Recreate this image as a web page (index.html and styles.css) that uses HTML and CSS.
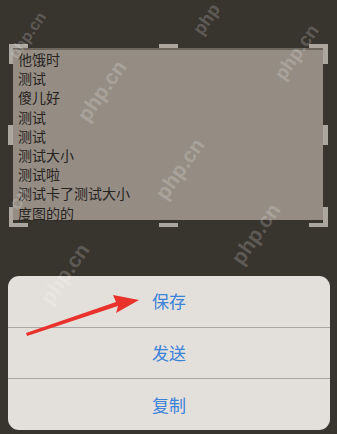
FILE: index.html
```html
<!DOCTYPE html>
<html lang="zh">
<head>
<meta charset="utf-8">
<link rel="stylesheet" href="styles.css">
</head>
<body>
<div class="screen">
  <div class="canvas">
    <div class="box">
      <div class="line">他饿时</div>
      <div class="line">测试</div>
      <div class="line">傻儿好</div>
      <div class="line">测试</div>
      <div class="line">测试</div>
      <div class="line">测试大小</div>
      <div class="line">测试啦</div>
      <div class="line">测试卡了测试大小</div>
      <div class="line">度图的的</div>
      <span class="h h-tl"></span>
      <span class="h h-tr"></span>
      <span class="h h-bl"></span>
      <span class="h h-br"></span>
      <span class="h h-tm"></span>
      <span class="h h-bm"></span>
      <span class="h h-lm"></span>
      <span class="h h-rm"></span>
    </div>
  </div>
  <div class="sheet">
    <div class="item">保存</div>
    <div class="item">发送</div>
    <div class="item">复制</div>
  </div>
  <svg class="arrow" width="337" height="434" viewBox="0 0 337 434">
    <polygon points="27,336 118,306 116,313 139,300 113,295 116,302 26,333" fill="#e8322b"/>
  </svg>
  <div class="wm wm1">php.cn</div>
  <div class="wm wm2">php.cn</div>
  <div class="wm wm3">php.cn</div>
  <div class="wm wm4">php.cn</div>
  <div class="wm wm5">php</div>
  <div class="wm wm6">php.cn</div>
  <div class="wm wm7">php.cn</div>
  <div class="wm wm8">cn</div>
</div>
</body>
</html>
```
FILE: styles.css
```css
html, body {
  margin: 0;
  padding: 0;
}
body {
  background: #38342e;
  font-family: "Noto Sans CJK SC", "Noto Sans", sans-serif;
  overflow: hidden;
}
.screen {
  position: relative;
  width: 337px;
  height: 434px;
  overflow: hidden;
  display: flex;
  flex-direction: column;
}
.canvas {
  padding: 48px 0 0 13px;
}
.box {
  position: relative;
  width: 310px;
  height: 172px;
  box-sizing: border-box;
  background: #958d83;
  border-top: 2px solid #6c665d;
  padding: 0 0 0 5px;
  color: #27231f;
  font-size: 14px;
  line-height: 19.2px;
}
.line {
  white-space: nowrap;
}
.h {
  position: absolute;
  background: #aba79f;
}
.h-tl, .h-tr, .h-bl, .h-br {
  width: 19px;
  height: 20px;
  background: transparent;
  box-sizing: border-box;
}
.h-tl { left: -4px; top: -6px; border-top: 4px solid #aba79f; border-left: 4px solid #aba79f; }
.h-tr { right: -5px; top: -6px; border-top: 4px solid #aba79f; border-right: 5px solid #aba79f; }
.h-bl { left: -4px; bottom: -7px; border-bottom: 4px solid #aba79f; border-left: 4px solid #aba79f; }
.h-br { right: -5px; bottom: -7px; border-bottom: 4px solid #aba79f; border-right: 5px solid #aba79f; }
.h-tm { left: 146px; top: -6px; width: 19px; height: 4px; }
.h-bm { left: 146px; bottom: -7px; width: 19px; height: 4px; }
.h-lm { left: -5px; top: 75px; width: 5px; height: 20px; }
.h-rm { right: -5px; top: 75px; width: 5px; height: 20px; }

.sheet {
  margin: 56px 0 0 8px;
  width: 322px;
  height: 154px;
  background: #e3e0dc;
  border-radius: 11px;
  display: flex;
  flex-direction: column;
  overflow: hidden;
}
.item {
  flex: 1;
  display: flex;
  align-items: center;
  justify-content: center;
  color: #3b82d9;
  font-size: 17px;
  padding-bottom: 1px;
}
.item + .item {
  border-top: 1px solid #a9a6a2;
}
.arrow {
  position: absolute;
  left: 0;
  top: 0;
  pointer-events: none;
}
.wm {
  position: absolute;
  color: rgba(255, 255, 255, 0.2);
  font-family: "Liberation Sans", Arial, sans-serif;
  font-weight: bold;
  font-size: 21px;
  transform: rotate(-55deg);
  transform-origin: left bottom;
  white-space: nowrap;
  pointer-events: none;
}
.wm1 { left: 20px; top: 44px; font-size: 16px; }
.wm2 { left: 92px; top: 102px; }
.wm3 { left: 288px; top: 62px; font-size: 19px; }
.wm4 { left: 170px; top: 180px; }
.wm5 { left: 206px; top: 18px; font-size: 18px; }
.wm6 { left: 55px; top: 285px; }
.wm7 { left: 246px; top: 245px; }
.wm8 { left: 22px; top: 192px; font-size: 19px; }
```
